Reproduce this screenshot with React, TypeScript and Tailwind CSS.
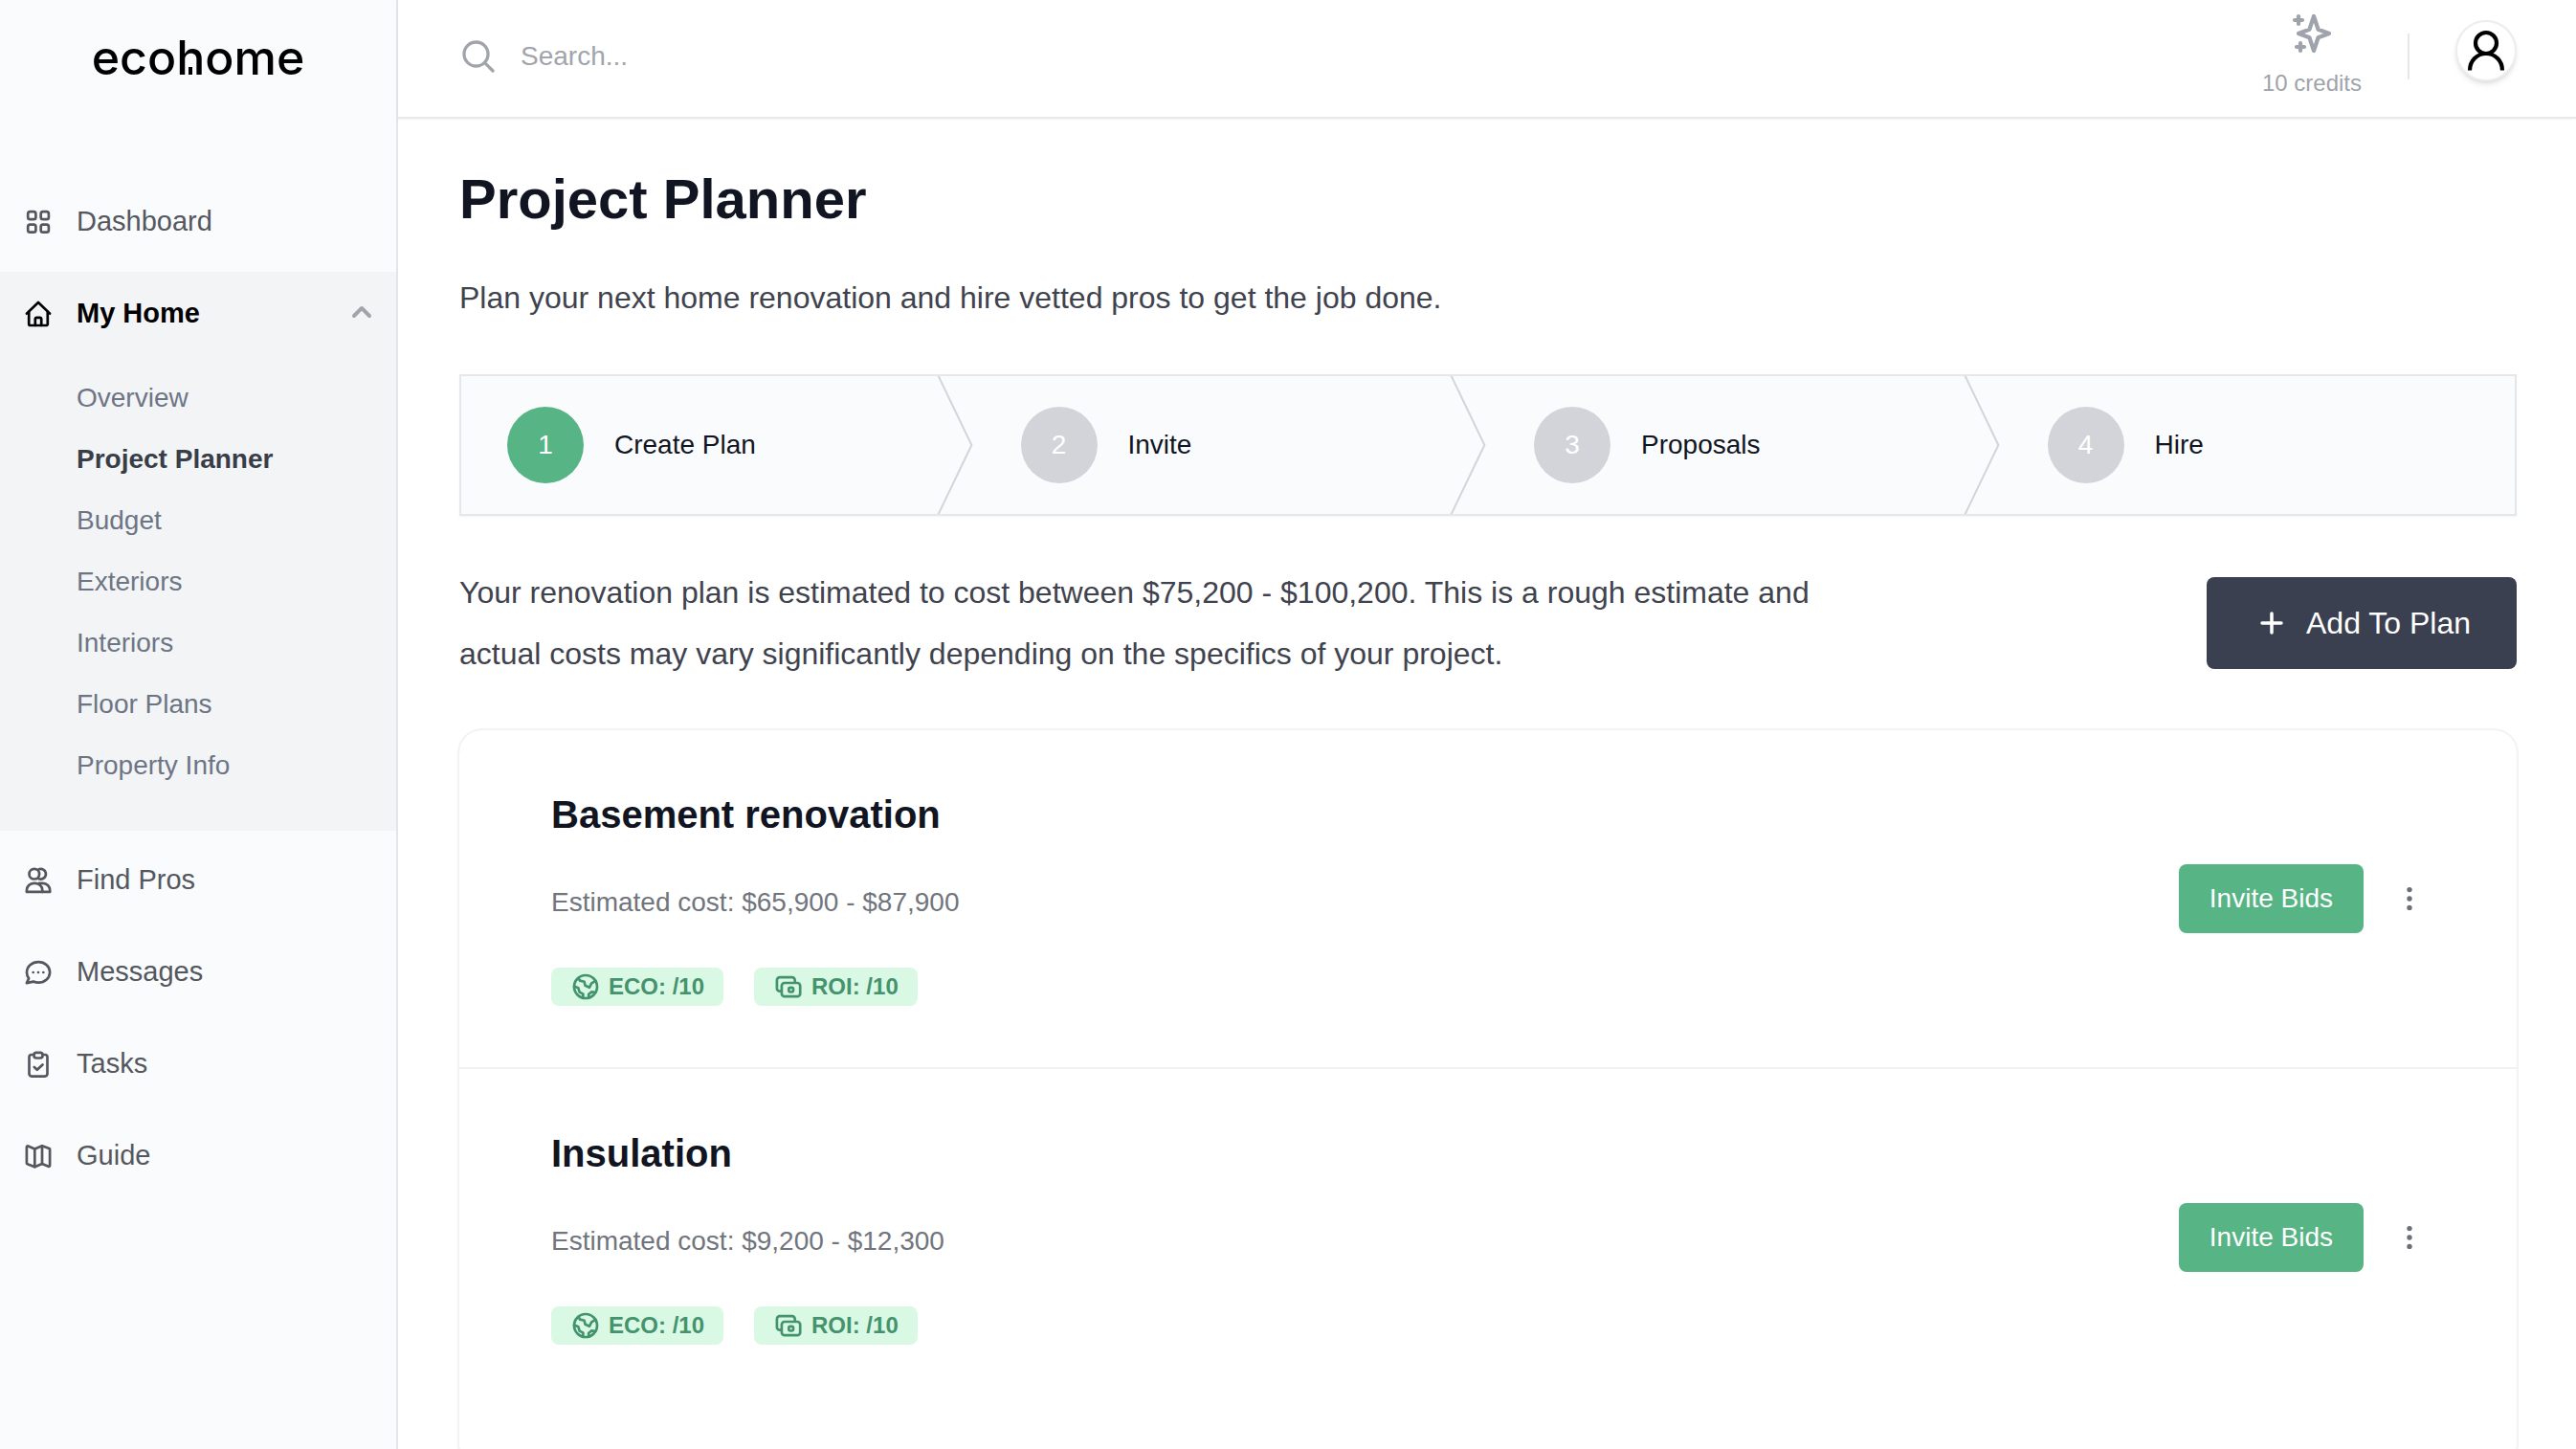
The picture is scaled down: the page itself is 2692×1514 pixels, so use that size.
import type { ReactNode } from "react";

type IconProps = { className?: string; children: ReactNode };

function LineIcon({ className = "size-8", children }: IconProps) {
  return (
    <svg
      viewBox="0 0 32 32"
      fill="none"
      stroke="currentColor"
      strokeWidth="2.7"
      strokeLinecap="round"
      strokeLinejoin="round"
      aria-hidden="true"
      className={`shrink-0 ${className}`}
    >
      {children}
    </svg>
  );
}

const GridIcon = () => (
  <LineIcon>
    <rect x="5.200" y="5.200" width="8.200" height="7.900" rx="2.200" />
    <rect x="18.700" y="5.200" width="8.200" height="7.900" rx="2.200" />
    <rect x="5.200" y="18.700" width="8.200" height="7.900" rx="2.200" />
    <rect x="18.700" y="18.700" width="8.200" height="7.900" rx="2.200" />
  </LineIcon>
);

const HomeIcon = () => (
  <LineIcon>
    <path d="M3.9 15.6 16 4l12.1 11.6" />
    <path d="M6.2 13.8V26.4a1.6 1.6 0 0 0 1.6 1.6h16.4a1.6 1.6 0 0 0 1.6-1.6V13.8" />
    <path d="M12.8 28v-6.600a1.600 1.600 0 0 1 1.600-1.600h3.200a1.600 1.600 0 0 1 1.600 1.600V28" />
  </LineIcon>
);

const UsersIcon = () => (
  <LineIcon>
    <circle cx="11.8" cy="9.2" r="5.3" />
    <path d="M16 4.600a5.300 5.300 0 1 1 0 9.200" />
    <path d="M3.900 27.900v-1.700a7.400 7.400 0 0 1 7.400-7.400h1.600a7.400 7.400 0 0 1 7.400 7.400v1.700Z" />
    <path d="M17 18.800h3.800a7.400 7.400 0 0 1 7.400 7.400v1.700h-7.900" />
  </LineIcon>
);

const ChatIcon = () => (
  <LineIcon>
    <path d="M16.200 5.100c6.700 0 11.900 4.600 11.900 10.700s-5.200 10.900-11.900 10.900c-1.900 0-3.700-.4-5.300-1.100l-7 1.500 2.200-4.700c-1.400-1.800-2.100-4-2.100-6.500 0-6.200 5.400-10.800 12.200-10.800Z" />
    <path d="M10.700 16h.01M16 16h.01M21.300 16h.01" />
  </LineIcon>
);

const ClipboardIcon = () => (
  <LineIcon>
    <path d="M11.500 6H9a2.500 2.500 0 0 0-2.500 2.500v17.600a2.500 2.500 0 0 0 2.500 2.500h14a2.500 2.500 0 0 0 2.500-2.500V8.500A2.500 2.500 0 0 0 23 6h-2.500" />
    <rect x="11.500" y="3.900" width="9" height="5.600" rx="2.400" />
    <path d="m11.800 19 3 2.800 5.700-5.300" />
  </LineIcon>
);

const MapIcon = () => (
  <LineIcon>
    <path d="M3.900 6.600c0-.9.700-1.400 1.500-1.100l6.900 3 7.700-3.200 7.400 2.700c.5.200.7.500.7 1v16.600c0 .9-.7 1.400-1.500 1.100L20 24.100l-7.700 3.100-7.700-3c-.5-.2-.7-.5-.7-1Z" />
    <path d="M12.300 8.500v18.700M20 5.300v18.800" />
  </LineIcon>
);

const GlobeIcon = () => (
  <LineIcon>
    <circle cx="16" cy="16" r="12" />
    <path d="M8.600 6.800 10 9.600l4.600 1.200 1 4 4.300 2 2.300-4.400 4.200-2.600" />
    <path d="M4 15.400l4.300 1.800 1.300 4.400 3.800 2-.2 4.200" />
    <path d="M19.400 27.500l-.3-3.500 3.200-2.600 4 .6" />
  </LineIcon>
);

const CashIcon = () => (
  <LineIcon>
    <path d="M8.600 20.700H6.900a3 3 0 0 1-3-3V9.200a3 3 0 0 1 3-3h12.800a3 3 0 0 1 3 3V11.500" />
    <rect x="8.900" y="12" width="19.300" height="14.200" rx="3" />
    <rect x="16.300" y="16.800" width="4.700" height="4.700" rx="1.700" />
  </LineIcon>
);

const ChevronUp = () => (
  <svg viewBox="0 1 20 20" fill="currentColor" aria-hidden="true" className="ml-auto size-10 text-[#a1a5ab]">
    <path d="M14.707 12.707a1 1 0 01-1.414 0L10 9.414l-3.293 3.293a1 1 0 01-1.414-1.414l4-4a1 1 0 011.414 0l4 4a1 1 0 010 1.414z" />
  </svg>
);

const navRow = "flex h-[88px] w-full items-center gap-6 pl-6 pr-4 text-left text-[29px]";

function NavLink({ icon, label }: { icon: ReactNode; label: string }) {
  return (
    <a href="#" className={`${navRow} text-[#54585e]`}>
      {icon}
      {label}
    </a>
  );
}

const homeLinks = ["Overview", "Project Planner", "Budget", "Exteriors", "Interiors", "Floor Plans", "Property Info"];

function Sidebar() {
  return (
    <aside className="w-[416px] shrink-0 border-r-2 border-[#e3e5e8] bg-[#fafbfd]">
      <div className="flex h-[124px] items-center justify-center pb-1">
        <a href="#" aria-label="ecohome" className="font-['Inter',sans-serif] text-[50px] font-medium text-black">
          eco
          <span className="relative">
            h
            <span className="absolute bottom-3 left-[13px] h-2 w-1 bg-black" />
          </span>
          ome
        </a>
      </div>
      <nav className="mt-16 flex flex-col gap-2">
        <NavLink icon={<GridIcon />} label="Dashboard" />
        <div className="bg-[#f3f4f6] pb-9">
          <button type="button" aria-expanded="true" className={`${navRow} font-bold text-black`}>
            <HomeIcon />
            My Home
            <ChevronUp />
          </button>
          <ul className="pt-3">
            {homeLinks.map((label) => (
              <li key={label}>
                <a
                  href="#"
                  className={
                    label === "Project Planner"
                      ? "flex h-16 items-center pl-20 text-[28px] font-bold text-[#383d47]"
                      : "flex h-16 items-center pl-20 text-[28px] text-[#6d7585]"
                  }
                >
                  {label}
                </a>
              </li>
            ))}
          </ul>
        </div>
        <NavLink icon={<UsersIcon />} label="Find Pros" />
        <NavLink icon={<ChatIcon />} label="Messages" />
        <NavLink icon={<ClipboardIcon />} label="Tasks" />
        <NavLink icon={<MapIcon />} label="Guide" />
      </nav>
    </aside>
  );
}

function Header() {
  return (
    <header className="flex h-[124px] shrink-0 border-b-2 border-[#e8e9eb] pl-16 pr-[62px] shadow-xs">
      <label className="flex h-[118px] flex-1 items-center gap-6 text-[#a1a5ab]">
        <svg
          viewBox="0 0 24 24"
          fill="none"
          stroke="currentColor"
          strokeWidth="2"
          strokeLinecap="round"
          aria-hidden="true"
          className="size-10 shrink-0"
        >
          <path d="m21 21-5.197-5.197m0 0A7.500 7.500 0 1 0 5.196 5.196a7.500 7.500 0 0 0 10.607 10.607Z" />
        </svg>
        <input
          type="search"
          aria-label="Search"
          placeholder="Search..."
          className="w-full bg-transparent text-[28px] outline-none placeholder:text-[#a1a5ab]"
        />
      </label>
      <div className="flex flex-col items-center pt-[11px] text-[#9fa3ab]">
        <svg
          viewBox="0 0 24 24"
          fill="none"
          stroke="currentColor"
          strokeWidth="2.1"
          strokeLinecap="round"
          strokeLinejoin="round"
          aria-hidden="true"
          className="size-12"
        >
          <path d="M5 3v4M3 5h4M6 17v4m-2-2h4m5-16l2.286 6.857L21 12l-5.714 2.143L13 21l-2.286-6.857L5 12l5.714-2.143L13 3z" />
        </svg>
        <span className="mt-3 text-2xl">10 credits</span>
      </div>
      <div className="ml-12 mt-[35px] h-12 w-0.5 bg-[#e5e7eb]" />
      <button
        type="button"
        aria-label="Account"
        className="ml-12 mt-[21px] flex size-16 items-center justify-center rounded-full border-2 border-[#ededef] bg-white shadow-md"
      >
        <svg viewBox="0 0 44 44" fill="none" stroke="black" strokeWidth="4.200" aria-hidden="true" className="size-11">
          <circle cx="22" cy="14" r="11" />
          <path d="M5 42.500c0-10 7.500-17.500 17-17.500s17 7.500 17 17.500" />
        </svg>
      </button>
    </header>
  );
}

const steps = ["Create Plan", "Invite", "Proposals", "Hire"];

function Stepper() {
  return (
    <ol className="grid grid-cols-4 border-2 border-[#e5e8ea] bg-[#fafbfd] shadow-xs">
      {steps.map((label, i) => (
        <li key={label} className="relative flex h-36 items-center gap-8 px-12">
          <span
            className={
              i === 0
                ? "flex size-20 items-center justify-center rounded-full bg-[#57b485] text-[28px] text-white"
                : "flex size-20 items-center justify-center rounded-full bg-[#d3d4da] text-[28px] text-white"
            }
          >
            {i + 1}
          </span>
          <span className="text-[28px] text-[#111522]">{label}</span>
          {i < steps.length - 1 && (
            <svg
              viewBox="0 0 22 80"
              fill="none"
              preserveAspectRatio="none"
              aria-hidden="true"
              className="absolute right-0 top-0 h-full w-10 text-[#d3d5d9]"
            >
              <path
                d="M0 -2L20 40L0 82"
                stroke="currentColor"
                strokeWidth="2"
                vectorEffect="non-scaling-stroke"
                strokeLinejoin="round"
              />
            </svg>
          )}
        </li>
      ))}
    </ol>
  );
}

function Badge({ icon, label }: { icon: ReactNode; label: string }) {
  return (
    <span className="flex h-10 items-center gap-2 rounded-lg bg-[#d9f9e5] px-5 text-2xl font-bold text-[#45936d]">
      {icon}
      {label}
    </span>
  );
}

const projects = [
  { name: "Basement renovation", cost: "$65,900 - $87,900" },
  { name: "Insulation", cost: "$9,200 - $12,300" },
];

function ProjectList() {
  return (
    <ul className="divide-y-2 divide-[#f1f2f4] rounded-3xl pb-16 shadow-sm ring-2 ring-[#f3f3f5]">
      {projects.map(({ name, cost }) => (
        <li key={name} className="flex items-center justify-between px-24 py-16">
          <div>
            <h2 className="text-[40px] leading-[48px] font-bold text-[#111522]">{name}</h2>
            <p className="mt-12 text-[28px] leading-10 text-[#71757d]">Estimated cost: {cost}</p>
            <div className="mt-12 flex gap-8">
              <Badge icon={<GlobeIcon />} label="ECO: /10" />
              <Badge icon={<CashIcon />} label="ROI: /10" />
            </div>
          </div>
          <div className="flex items-center gap-8">
            <button type="button" className="h-[72px] rounded-lg bg-[#57b485] px-8 text-[28px] text-white">
              Invite Bids
            </button>
            <button type="button" aria-label={`Options for ${name}`} className="text-[#6b7078]">
              <svg viewBox="0 0 32 32" fill="currentColor" aria-hidden="true" className="size-8">
                <circle cx="16" cy="6.600" r="2.700" />
                <circle cx="16" cy="16" r="2.700" />
                <circle cx="16" cy="25.400" r="2.700" />
              </svg>
            </button>
          </div>
        </li>
      ))}
    </ul>
  );
}

export default function App() {
  return (
    <div className="flex h-screen overflow-hidden bg-white font-['Liberation_Sans',Arial,sans-serif]">
      <Sidebar />
      <div className="flex min-w-0 flex-1 flex-col">
        <Header />
        <main className="flex-1 overflow-y-auto pl-16 pr-[62px] pb-16 [scrollbar-width:none]">
          <h1 className="mt-12 text-[58px] leading-[72px] font-bold text-[#111522]">Project Planner</h1>
          <p className="mt-[35px] mb-12 text-[32px] leading-[64px] text-[#3f434e]">
            Plan your next home renovation and hire vetted pros to get the job done.
          </p>
          <Stepper />
          <div className="mt-12 mb-12 flex items-center justify-between">
            <p className="max-w-[1440px] text-[32px] leading-[64px] text-[#3f434e]">
              Your renovation plan is estimated to cost between $75,200 - $100,200. This is a rough estimate and actual
              costs may vary significantly depending on the specifics of your project.
            </p>
            <button
              type="button"
              className="flex h-24 items-center gap-4 rounded-lg bg-[#3b4050] px-12 text-[32px] text-white"
            >
              <svg
                viewBox="0 0 40 40"
                fill="none"
                stroke="currentColor"
                strokeWidth="3.500"
                strokeLinecap="round"
                aria-hidden="true"
                className="size-10"
              >
                <path d="M20 10v20M10 20h20" />
              </svg>
              Add To Plan
            </button>
          </div>
          <ProjectList />
        </main>
      </div>
    </div>
  );
}
